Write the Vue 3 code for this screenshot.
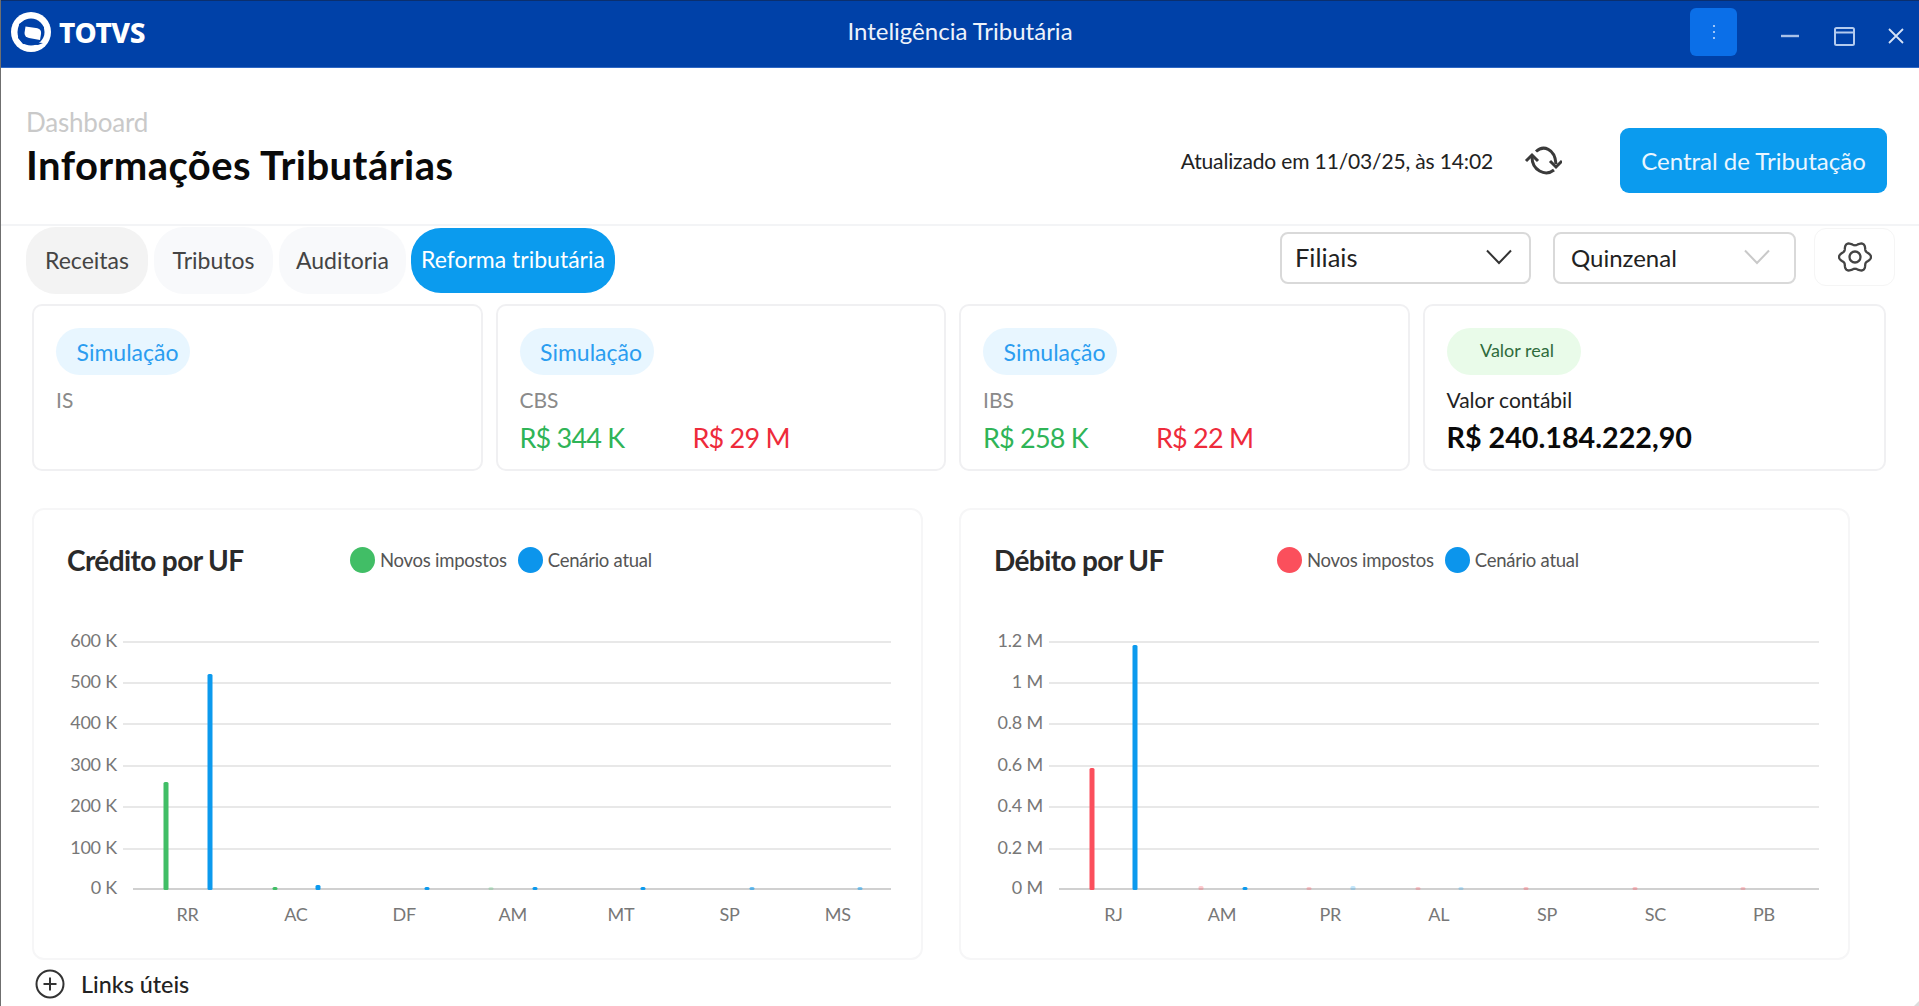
<script setup>
const cards = [
  { pill: 'Simulação', label: 'IS', pos: '', neg: '' },
  { pill: 'Simulação', label: 'CBS', pos: 'R$ 344 K', neg: 'R$ 29 M' },
  { pill: 'Simulação', label: 'IBS', pos: 'R$ 258 K', neg: 'R$ 22 M' }
]

const gridY = [642, 683, 724, 766, 807, 849, 889]

function makeChart(title, newColor, yLabels, xLabels, bars, x0, x1, axisX, firstCenter) {
  return {
    title, newColor, xLabels, bars, x0, x1, axisX,
    rows: yLabels.map((t, i) => ({ t, y: gridY[i] - 508 })),
    cols: xLabels.map((t, i) => ({ t, x: firstCenter + i * 108.4 }))
  }
}

const GREEN = '#41be66'
const RED = '#fb4f5c'
const BLUE = '#0c9aee'

const charts = [
  makeChart('Crédito por UF', GREEN,
    ['600 K', '500 K', '400 K', '300 K', '200 K', '100 K', '0 K'],
    ['RR', 'AC', 'DF', 'AM', 'MT', 'SP', 'MS'],
    [
      { x: 132, top: 273, c: GREEN, o: 1 }, { x: 176, top: 165, c: BLUE, o: 1 },
      { x: 241, top: 378, c: GREEN, o: 1 }, { x: 284, top: 376, c: BLUE, o: 1 },
      { x: 393, top: 378, c: BLUE, o: 1 },
      { x: 457, top: 378, c: GREEN, o: 0.25 }, { x: 501, top: 378, c: BLUE, o: 1 },
      { x: 609, top: 378, c: BLUE, o: 1 },
      { x: 718, top: 378, c: BLUE, o: 0.6 },
      { x: 826, top: 378, c: BLUE, o: 0.5 }
    ], 89, 857, 99, 153.5),
  makeChart('Débito por UF', RED,
    ['1.2 M', '1 M', '0.8 M', '0.6 M', '0.4 M', '0.2 M', '0 M'],
    ['RJ', 'AM', 'PR', 'AL', 'SP', 'SC', 'PB'],
    [
      { x: 131, top: 259, c: RED, o: 1 }, { x: 174, top: 136, c: BLUE, o: 1 },
      { x: 240, top: 377, c: RED, o: 0.3 }, { x: 284, top: 378, c: BLUE, o: 1 },
      { x: 348, top: 378, c: RED, o: 0.3 }, { x: 392, top: 377, c: BLUE, o: 0.25 },
      { x: 457, top: 378, c: RED, o: 0.3 }, { x: 500, top: 378, c: BLUE, o: 0.25 },
      { x: 565, top: 378, c: RED, o: 0.35 },
      { x: 674, top: 378, c: RED, o: 0.35 },
      { x: 782, top: 378, c: RED, o: 0.3 }
    ], 88, 858, 98, 152.5)
]

const gearPath = (() => {
  const pts = []
  for (let i = 0; i < 120; i++) {
    const a = (i / 120) * Math.PI * 2
    const r = 13.4 + 1.7 * Math.cos(6 * a)
    pts.push(`${(17 + r * 1.06 * Math.cos(a)).toFixed(2)} ${(17 + r * Math.sin(a)).toFixed(2)}`)
  }
  return 'M' + pts.join('L') + 'Z'
})()
</script>

<template>
  <div class="page">
    <header class="topbar">
      <div class="brand">
        <svg class="logo" viewBox="0 0 40 40" aria-hidden="true">
          <circle cx="20" cy="20" r="20" fill="#fff" />
          <circle cx="20" cy="20" r="13.500" fill="#0041a8" />
          <path d="M8 12 L14 8 L27 11 L33 15 L33 18 L27 16 C22 14.500 14 13.500 14 13.500 L13 24 C13 27 16 29 20 30 L32 31 L27 33 L12 32 L7 26 Z" fill="#0041a8" />
          <path d="M14.500 14.500 L25 16 C29 16.800 30.500 18.500 30 22 L29 28 L18 26 C15 25.300 13.500 23.500 13.500 21 Z" fill="#fff" />
        </svg>
        <span class="wordmark">TOTVS</span>
      </div>
      <div class="app-title">Inteligência Tributária</div>
      <div class="window-tools">
        <button class="kebab" type="button" aria-label="Menu">
          <svg width="4" height="16" viewBox="0 0 4 16"><circle cx="2" cy="2" r="1" fill="#cfe2ff" /><circle cx="2" cy="8" r="1" fill="#cfe2ff" /><circle cx="2" cy="14" r="1" fill="#cfe2ff" /></svg>
        </button>
        <svg class="win win-min" width="18" height="4" viewBox="0 0 18 4"><path d="M0 2H18" stroke="#a9c1e8" stroke-width="2.4" /></svg>
        <svg class="win win-max" width="21" height="19" viewBox="0 0 21 19"><rect x="1" y="1" width="19" height="17" rx="1.5" fill="none" stroke="#b4cbee" stroke-width="2" /><path d="M1 5.5H20" stroke="#b4cbee" stroke-width="2" /></svg>
        <svg class="win win-close" width="16" height="16" viewBox="0 0 16 16"><path d="M1 1L15 15M15 1L1 15" stroke="#d5e2f6" stroke-width="1.8" /></svg>
      </div>
    </header>

    <section class="heading">
      <div class="heading-text">
        <div class="crumb">Dashboard</div>
        <h1>Informações Tributárias</h1>
      </div>
      <div class="heading-actions">
        <span class="updated">Atualizado em 11/03/25, às 14:02</span>
        <svg class="refresh" width="38" height="34" viewBox="14 13 38 34" fill="none" stroke="#3a3a3a" stroke-width="3">
          <path d="M26 21.500 C33 15 45 18 46 34" />
          <path d="M22 27 C22 40 35 47 44 40" />
          <path d="M40 31 L46 37 L52 31" />
          <path d="M16 31 L22 25 L28 31" />
        </svg>
        <button class="primary" type="button">Central de Tributação</button>
      </div>
    </section>

    <section class="toolbar">
      <nav class="tabs">
        <span class="tab tab-active-grey">Receitas</span>
        <span class="tab tab-tributos">Tributos</span>
        <span class="tab tab-auditoria">Auditoria</span>
        <span class="tab tab-current">Reforma tributária</span>
      </nav>
      <div class="filters">
        <div class="select select-filiais">
          <span>Filiais</span>
          <svg width="26" height="16" viewBox="0 0 26 16" fill="none" stroke="#333" stroke-width="2"><path d="M1 1.500 L13 14 L25 1.500" /></svg>
        </div>
        <div class="select select-quinzenal">
          <span>Quinzenal</span>
          <svg width="26" height="16" viewBox="0 0 26 16" fill="none" stroke="#c9c9c9" stroke-width="2"><path d="M1 1.500 L13 14 L25 1.500" /></svg>
        </div>
        <button class="gear-btn" type="button" aria-label="Configurações">
          <svg width="34" height="34" viewBox="0 0 34 34" fill="none" stroke="#444" stroke-width="2.300">
            <path :d="gearPath" />
            <circle cx="17" cy="17" r="5.500" />
          </svg>
        </button>
      </div>
    </section>

    <section class="cards">
      <article v-for="card in cards" :key="card.label" class="card">
        <span class="pill pill-sim">{{ card.pill }}</span>
        <div class="card-label">{{ card.label }}</div>
        <div class="card-values">
          <span v-if="card.pos" class="pos">{{ card.pos }}</span>
          <span v-if="card.neg" class="neg">{{ card.neg }}</span>
        </div>
      </article>
      <article class="card card-wide">
        <span class="pill pill-real">Valor real</span>
        <div class="card-label card-label-dark">Valor contábil</div>
        <div class="card-total">R$ 240.184.222,90</div>
      </article>
    </section>

    <section class="charts">
      <article v-for="chart in charts" :key="chart.title" class="chart-card">
        <svg class="chart-svg" width="888" height="451" viewBox="0 0 888 451">
          <g v-for="row in chart.rows" :key="row.t">
            <line :x1="row.t.startsWith('0 ') ? chart.axisX : chart.x0" :x2="chart.x1" :y1="row.y" :y2="row.y" :stroke="row.t.startsWith('0 ') ? '#d0d0d0' : '#e8e8e8'" stroke-width="2" />
            <text :x="chart.x0 - 6" :y="row.y + 5" text-anchor="end" class="axis-text">{{ row.t }}</text>
          </g>
          <text v-for="col in chart.cols" :key="col.t" :x="col.x" y="413" text-anchor="middle" class="axis-text">{{ col.t }}</text>
          <rect v-for="bar in chart.bars" :key="bar.x" :x="bar.x - 2.500" :y="bar.top + 1" width="5" :height="381 - bar.top" rx="1.500" :fill="bar.c" :opacity="bar.o" />
        </svg>
        <div class="chart-head">
          <h2>{{ chart.title }}</h2>
          <div class="legend">
            <i class="dot" :style="{ background: chart.newColor }"></i>
            <span>Novos impostos</span>
            <i class="dot dot-blue"></i>
            <span>Cenário atual</span>
          </div>
        </div>
      </article>
    </section>

    <footer class="links">
      <svg width="30" height="30" viewBox="0 0 30 30" fill="none" stroke="#333" stroke-width="2"><circle cx="15" cy="15" r="13.500" /><path d="M15 8.500V21.500M8.500 15H21.500" /></svg>
      <span>Links úteis</span>
    </footer>
  </div>
</template>

<style scoped>
.page {
  position: relative;
  width: 1919px;
  height: 1006px;
  box-sizing: border-box;
  overflow: hidden;
  border-left: 1px solid #6f6f6f;
  background: #fff;
  font-family: Lato, "Noto Sans", sans-serif;
  color: #222;
}
.page::after {
  content: "";
  position: absolute;
  right: 0;
  bottom: 0;
  border-style: solid;
  border-width: 0 0 5px 5px;
  border-color: transparent transparent #dcdcdc transparent;
}
.topbar {
  height: 68px;
  box-sizing: border-box;
  border-top: 1px solid #0b2f6e;
  border-bottom: 1px solid #2f68c4;
  background: #0041a8;
  display: grid;
  grid-template-columns: 1fr auto 1fr;
  align-items: center;
  color: #fff;
}
.brand { display: flex; align-items: center; gap: 8px; padding-left: 10px; margin-top: -5px; }
.logo { width: 40px; height: 40px; }
.wordmark { font-family: "Noto Sans", sans-serif; font-weight: 800; font-size: 28px; letter-spacing: -0.4px; line-height: 1; }
.app-title { font-size: 24px; margin-top: -7px; color: #eef3fb; }
.window-tools { display: flex; justify-content: flex-end; align-items: center; position: relative; height: 100%; }
.kebab {
  width: 47px; height: 48px; padding: 0; border: 0; border-radius: 6px; background: #0b6fe8;
  display: flex; align-items: center; justify-content: center; margin-right: 44px; margin-top: -4px;
}
.win { flex: none; margin-top: 4px; }
.win-min { margin-right: 35px; }
.win-max { margin-right: 33px; }
.win-close { margin-right: 15px; }
.heading {
  height: 158px;
  box-sizing: border-box;
  border-bottom: 2px solid #f3f4f6;
  display: flex;
  justify-content: space-between;
  padding: 39px 32px 0 25px;
}
.crumb { font-size: 26px; line-height: 30px; color: #c9c9c9; letter-spacing: -0.2px; }
h1 { margin: 5px 0 0; font-size: 40px; line-height: 46px; font-weight: 700; color: #0a0a0a; letter-spacing: 0.45px; }
.heading-actions { display: flex; align-items: center; height: 64px; margin-top: 21px; }
.updated { font-size: 21px; color: #222; margin-right: 31px; letter-spacing: -0.15px; }
.refresh { margin-right: 58px; }
.primary {
  width: 267px; height: 65px; border: 0; border-radius: 9px; background: #0b9bee; color: #eaf6ff;
  font: 400 24px Lato, sans-serif;
}
.toolbar { display: flex; justify-content: space-between; padding: 0 24px 0 25px; height: 76px; }
.tabs { display: flex; align-items: flex-start; gap: 6px; margin-top: 1px; }
.tab {
  height: 67px; box-sizing: border-box; display: flex; align-items: center; justify-content: center;
  border-radius: 30px; font-size: 23px; color: #444; background: #f8f9fb; padding-bottom: 2px;
}
.tab-active-grey { width: 122px; background: #f3f3f3; }
.tab-tributos { width: 119px; }
.tab-auditoria { width: 127px; }
.tab-current { width: 204px; height: 65px; margin-top: 1px; background: #0b9bee; color: #fff; margin-left: -1px; padding-bottom: 3px; }
.filters { display: flex; align-items: flex-start; }
.select {
  height: 52px; margin-top: 6px; box-sizing: border-box; border: 2px solid #d9d9d9; border-radius: 8px;
  display: flex; align-items: center; justify-content: space-between; color: #222; background: #fff;
}
.select-filiais { width: 251px; padding: 0 17px 2px 13px; margin-right: 22px; font-size: 25.5px; }
.select-quinzenal { width: 243px; padding: 0 24px 2px 16px; margin-right: 18px; font-size: 24px; }
.gear-btn {
  width: 81px; height: 58px; margin-top: 2px; padding: 0; background: #fff; border: 1px solid #f5f5f5; border-radius: 12px;
  display: flex; align-items: center; justify-content: center;
}
.cards { display: flex; gap: 13px; padding-left: 31px; margin-top: 2px; }
.card {
  width: 450.5px; height: 167px; box-sizing: border-box; padding: 22px 22px 0; border: 2px solid #f0f0f2; border-radius: 10px;
  display: flex; flex-direction: column; align-items: flex-start;
}
.card-wide { width: 463px; }
.pill {
  width: 134px; height: 47px; border-radius: 24px; display: flex; align-items: center; justify-content: center;
}
.pill-sim { background: #e8f6ff; color: #2b9df0; font-size: 23px; padding-left: 9px; box-sizing: border-box; }
.pill-real { background: #e9fbe9; color: #2f6b3c; font-size: 18px; padding-left: 7px; box-sizing: border-box; padding-bottom: 3px; }
.card-label { margin-top: 12px; font-size: 21px; line-height: 26px; color: #8a8a8a; }
.card-label-dark { color: #222; }
.card-values { display: flex; margin-top: 7px; font-size: 27px; line-height: 36px; letter-spacing: -0.8px; }
.pos { width: 173px; color: #2fb457; }
.neg { color: #ee2b3b; }
.card-total { margin-top: 6px; font-size: 28.7px; line-height: 36px; font-weight: 700; color: #0a0a0a; }
.charts { display: flex; gap: 36px; padding-left: 31px; margin-top: 37px; }
.chart-card {
  position: relative; width: 891px; height: 452px; box-sizing: border-box; border: 2px solid #f6f6f7; border-radius: 12px; flex: none;
}
.chart-svg { position: absolute; left: 0; top: -2px; display: block; }
.axis-text { font-family: Lato, sans-serif; font-size: 18px; fill: #777; letter-spacing: -0.2px; }
.chart-head { position: relative; display: flex; align-items: center; padding: 35px 0 0 33px; height: 30px; }
.chart-head h2 { margin: 0; width: 283px; font-size: 28px; font-weight: 700; color: #2a2a2a; letter-spacing: -0.6px; white-space: nowrap; }
.legend { display: flex; align-items: center; font-size: 18.5px; color: #555; letter-spacing: -0.25px; }
.legend span { margin-right: 11px; }
.dot { width: 25px; height: 26px; border-radius: 50%; margin-right: 5px; }
.dot-blue { background: #0c95ec; }
.links { display: flex; align-items: center; gap: 16px; padding-left: 34px; margin-top: 9px; font-size: 23.3px; color: #222; font-weight: 500; }
</style>

<style>
html, body { margin: 0; overflow: hidden; background: #fff; }
</style>
